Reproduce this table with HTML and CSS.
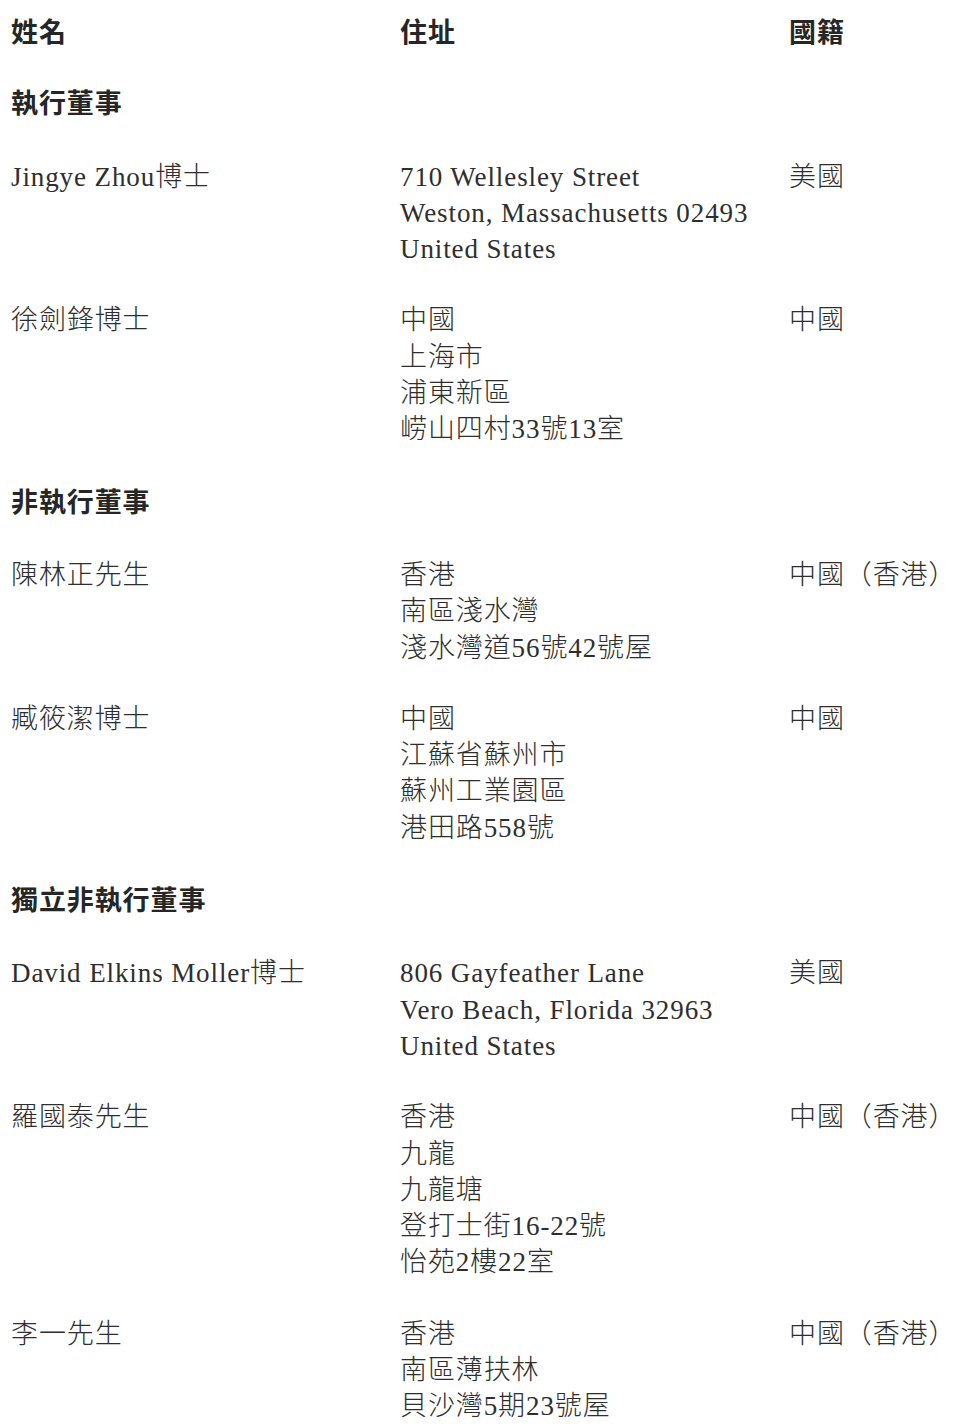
FILE: index.html
```html
<!DOCTYPE html>
<html lang="zh-Hant">
<head>
<meta charset="utf-8">
<title>董事</title>
<link rel="stylesheet" href="styles.css">
</head>
<body>
<div class="page">
  <div class="row head">
    <div class="cell">姓名</div>
    <div class="cell">住址</div>
    <div class="cell">國籍</div>
  </div>

  <div class="section">執行董事</div>

  <div class="row">
    <div class="cell">Jingye Zhou博士</div>
    <div class="cell">710 Wellesley Street<br>Weston, Massachusetts 02493<br>United States</div>
    <div class="cell">美國</div>
  </div>
  <div class="row">
    <div class="cell">徐劍鋒博士</div>
    <div class="cell">中國<br>上海市<br>浦東新區<br>崂山四村33號13室</div>
    <div class="cell">中國</div>
  </div>

  <div class="section">非執行董事</div>

  <div class="row">
    <div class="cell">陳林正先生</div>
    <div class="cell">香港<br>南區淺水灣<br>淺水灣道56號42號屋</div>
    <div class="cell">中國（香港）</div>
  </div>
  <div class="row">
    <div class="cell">臧筱潔博士</div>
    <div class="cell">中國<br>江蘇省蘇州市<br>蘇州工業園區<br>港田路558號</div>
    <div class="cell">中國</div>
  </div>

  <div class="section">獨立非執行董事</div>

  <div class="row">
    <div class="cell">David Elkins Moller博士</div>
    <div class="cell">806 Gayfeather Lane<br>Vero Beach, Florida 32963<br>United States</div>
    <div class="cell">美國</div>
  </div>
  <div class="row">
    <div class="cell">羅國泰先生</div>
    <div class="cell">香港<br>九龍<br>九龍塘<br>登打士街16-22號<br>怡苑2樓22室</div>
    <div class="cell">中國（香港）</div>
  </div>
  <div class="row">
    <div class="cell">李一先生</div>
    <div class="cell">香港<br>南區薄扶林<br>貝沙灣5期23號屋</div>
    <div class="cell">中國（香港）</div>
  </div>
</div>
</body>
</html>
```

FILE: styles.css
```css
html, body {
  margin: 0;
  padding: 0;
  background: #ffffff;
}

.page {
  padding: 13px 0 0 11px;
  font-family: "Liberation Serif", "Noto Sans CJK TC", serif;
  font-size: 27px;
  line-height: 36.3px;
  letter-spacing: 0.9px;
  color: #2e2e2e;
  font-weight: 300;
}

.row {
  display: grid;
  grid-template-columns: 389px 389px auto;
  margin-bottom: 35px;
}

.head,
.section {
  font-family: "Noto Sans CJK TC", sans-serif;
  font-weight: 700;
  color: #262626;
}

.head {
  margin-bottom: 35px;
}

.section {
  margin-bottom: 38px;
}

.cell {
  white-space: nowrap;
}
```
